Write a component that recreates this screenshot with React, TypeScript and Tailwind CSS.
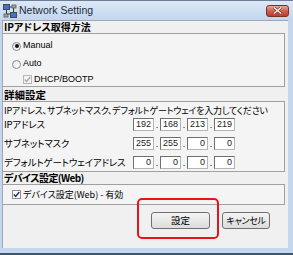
import React from 'react';

const jp = "font-['Noto_Sans_CJK_JP',sans-serif] [font-feature-settings:'palt'] whitespace-nowrap";
const latin = "font-['Liberation_Sans',sans-serif] whitespace-nowrap";

function Radio({ checked }: { checked?: boolean }) {
  return (
    <span className="w-[9px] h-[9px] rounded-full border border-[#8a8a8a] bg-linear-to-br from-[#e6e6e6] to-white flex items-center justify-center">
      {checked && <span className="w-[4px] h-[4px] rounded-full bg-[#111]" />}
    </span>
  );
}

function Check({ disabled }: { disabled?: boolean }) {
  return (
    <span
      className={`w-[9px] h-[9px] border flex items-center justify-center ${
        disabled ? 'border-[#b8b8b8] bg-[#f4f4f4]' : 'border-[#8e8f8f] bg-white'
      }`}
    >
      <svg width="7" height="7" viewBox="0 0 7 7">
        <path
          d="M0.8 3.4 L2.7 5.4 L6.2 1"
          fill="none"
          stroke={disabled ? '#a9a9a9' : '#1e2f57'}
          strokeWidth="1.4"
        />
      </svg>
    </span>
  );
}

function IpRow({ label, values }: { label: string; values: string[] }) {
  return (
    <div className="flex items-center h-[13px]">
      <div className={`w-[130px] pl-[1px] text-[9.5px] tracking-[-0.2px] leading-none text-black ${jp}`}>{label}</div>
      {values.map((v, i) => (
        <React.Fragment key={i}>
          {i > 0 && (
            <span className={`w-[6px] h-[13px] flex items-end justify-center text-[9px] leading-none pb-[1px] ${latin}`}>.</span>
          )}
          <span
            className={`w-[21px] h-[13px] bg-white border border-[#b5b5b5] border-t-[#6f6f6f] border-l-[#6f6f6f] flex items-center justify-end pr-[2px] text-[9px] leading-none text-[#222] ${latin}`}
          >
            {v}
          </span>
        </React.Fragment>
      ))}
    </div>
  );
}

function NetIcon() {
  return (
    <svg width="14" height="14" viewBox="0 0 14 14">
      <rect x="0.5" y="0.5" width="6" height="5" fill="#3c78c8" stroke="#4a4a4a" strokeWidth="1" />
      <rect x="7.5" y="8.5" width="6" height="5" fill="#3c78c8" stroke="#4a4a4a" strokeWidth="1" />
      <path d="M3.5 6 V10 H7.5 M10.5 8 V3 H7" fill="none" stroke="#3a3a3a" strokeWidth="1" />
      <rect x="1" y="10" width="4" height="3" fill="#9aa" stroke="#555" strokeWidth="0.8" />
      <rect x="9" y="1" width="4" height="3" fill="#9aa" stroke="#555" strokeWidth="0.8" />
    </svg>
  );
}

export default function App() {
  return (
    <div className="w-[293px] h-[255px] relative overflow-hidden bg-[#c4d7ee] flex flex-col">
      {/* title bar */}
      <div className="h-[20px] shrink-0 flex items-center bg-linear-to-b from-[#dde8f6] to-[#c2d6ee] border-t border-[#6d7f96]">
        <div className="ml-[3px]">
          <NetIcon />
        </div>
        <span className={`ml-[2px] text-[10.5px] text-[#1c2b40] ${latin}`}>Network Setting</span>
        <button className="ml-auto mr-[4px] w-[23px] h-[12px] rounded-[3px] border border-[#7a3128] bg-linear-to-b from-[#e4a597] via-[#cd5f4f] to-[#b8402f] flex items-center justify-center">
          <svg width="9" height="7" viewBox="0 0 9 7">
            <path d="M1 0.5 L8 6.5 M8 0.5 L1 6.5" stroke="#6b2a22" strokeWidth="2.4" />
            <path d="M1 0.5 L8 6.5 M8 0.5 L1 6.5" stroke="#fff" strokeWidth="1.3" />
          </svg>
        </button>
      </div>

      {/* client area */}
      <div className="ml-[2px] mr-[5px] h-[228px] bg-[#f0f0f0] border-t border-l border-[#9ea7b3] flex flex-col">
        <div className={`h-[12px] flex items-center pl-[1px] text-[10px] font-bold leading-none text-black ${jp}`}>
          IPアドレス取得方法
        </div>
        <div className="h-[54px] mr-[3px] border-t border-b border-r border-[#a0a0a0] bg-[#f4f4f4] flex flex-col pt-[3px]">
          <div className="h-[18px] flex items-center pl-[9px] gap-[2px]">
            <Radio checked />
            <span className={`text-[9px] text-black ${latin}`}>Manual</span>
          </div>
          <div className="h-[18px] flex items-center pl-[9px] gap-[2px]">
            <Radio />
            <span className={`text-[9px] text-black ${latin}`}>Auto</span>
          </div>
          <div className="h-[13px] flex items-center pl-[20px] gap-[2px]">
            <Check disabled />
            <span className={`text-[9px] text-black ${latin}`}>DHCP/BOOTP</span>
          </div>
        </div>

        <div className={`h-[14px] flex items-center pl-[1px] pt-[2px] text-[10.5px] font-bold leading-none text-black ${jp}`}>
          詳細設定
        </div>
        <div className="h-[71px] mr-[3px] border-t border-b border-r border-[#a0a0a0] bg-[#f4f4f4] flex flex-col pt-[2px]">
          <div className={`h-[12px] flex items-center pl-[1px] text-[9px] tracking-[-0.2px] leading-none text-black ${jp}`}>
            IPアドレス、サブネットマスク、デフォルトゲートウェイを入力してください
          </div>
          <div className="mt-[2px] flex flex-col gap-[6px]">
            <IpRow label="IPアドレス" values={['192', '168', '213', '219']} />
            <IpRow label="サブネットマスク" values={['255', '255', '0', '0']} />
            <IpRow label="デフォルトゲートウェイアドレス" values={['0', '0', '0', '0']} />
          </div>
        </div>

        <div className={`h-[12px] flex items-center pl-[1px] text-[10px] font-bold leading-none tracking-[-0.6px] text-black ${jp}`}>
          デバイス設定(Web)
        </div>
        <div className="h-[21px] mr-[3px] border-t border-b border-r border-[#a0a0a0] bg-[#f4f4f4] flex items-center pl-[9px] gap-[2px]">
          <Check />
          <span className={`text-[9px] leading-none text-black ${jp}`}>デバイス設定(Web) - 有効</span>
        </div>

        <div className="flex-1 flex items-start pt-[7px] pl-[148px] gap-[12px]">
          <button
            className={`w-[59px] h-[17px] rounded-[3px] border border-[#707070] bg-linear-to-b from-[#f4f4f4] to-[#dcdcdc] text-[9.5px] leading-none text-black ${jp}`}
          >
            設定
          </button>
          <button
            className={`w-[48px] h-[17px] rounded-[3px] border border-[#707070] bg-linear-to-b from-[#f4f4f4] to-[#dcdcdc] text-[9px] tracking-[-0.3px] leading-none text-black ${jp}`}
          >
            キャンセル
          </button>
        </div>
      </div>

      {/* bottom frame */}
      <div className="flex-1 flex flex-col justify-end">
        <div className="h-[2px] bg-[#3c5670]" />
      </div>

      {/* highlight annotation */}
      <div className="absolute left-[137px] top-[198px] w-[82px] h-[41px] border-2 border-[#e8141b] rounded-[5px]" />
    </div>
  );
}
